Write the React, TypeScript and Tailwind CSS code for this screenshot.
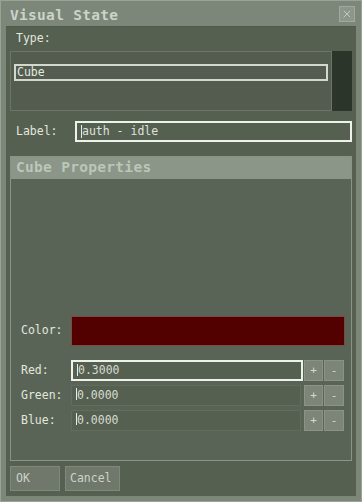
import { X } from 'lucide-react';

const mono = { fontFamily: '"DejaVu Sans Mono", "Liberation Mono", monospace' };

const Spin = ({ label, value, focused }: { label: string; value: string; focused?: boolean }) => (
  <div className="flex items-center h-[21px]">
    <span className="w-[60px] pl-[10px] text-[11.5px] text-[#e2e7de]">{label}</span>
    <div
      className={`relative flex items-center h-full pl-[5px] text-[11.5px] text-[#d6dbd2] ${
        focused ? 'w-[232px] border-2 border-[#eef2ea] bg-[#566051]' : 'w-[230px] border border-[#626c5e] bg-[#556050]'
      }`}
    >
      <span className="absolute left-[4px] top-[2px] w-px h-[12px] bg-[#e8ece4]" />
      {value}
    </div>
    <div className={`flex h-full gap-px ${focused ? 'ml-px' : 'ml-[3px]'}`}>
      <button className="w-[19px] h-full bg-[#7d8579] border border-[#8b9387] text-[#d4d9d0] text-[11px] leading-none">+</button>
      <button className="w-[20px] h-full bg-[#7d8579] border border-[#8b9387] text-[#d4d9d0] text-[11px] leading-none">-</button>
    </div>
  </div>
);

const App = () => {
  return (
    <div style={mono} className="w-[362px] h-[502px] bg-[#7c8679] border border-[#9aa296] flex flex-col overflow-hidden">
      <div className="h-[25px] flex items-center justify-between pl-[9px] pr-[6px] shrink-0">
        <span className="mt-[4px] text-[14.5px] font-bold text-[#ccd3c8] tracking-[0.3px]">Visual State</span>
        <button className="w-[16px] h-[16px] bg-[#8d968a] border border-[#a2aa9e] flex items-center justify-center text-[#dfe4db]">
          <X size={12} strokeWidth={1.3} />
        </button>
      </div>

      <div className="flex-1 mx-[5px] mb-[5px] bg-[#566051] border-t border-[#4f584b] px-[4px] flex flex-col">
        <div className="h-[24px] flex items-center pl-[6px] text-[11.5px] text-[#e2e7de]">Type:</div>

        <div className="h-[60px] flex shrink-0">
          <div className="flex-1 border border-[#6c7668] bg-[#535c4f] pt-[12px] px-[3px]">
            <div className="h-[17px] border-2 border-[#d3d8cf] flex items-center pl-[1px] text-[11.5px] text-[#e4e8e0]">Cube</div>
          </div>
          <div className="w-[20px] bg-[#2b3529]" />
        </div>

        <div className="mt-[10px] h-[21px] flex items-center shrink-0">
          <span className="w-[65px] pl-[6px] text-[11.5px] text-[#e2e7de]">Label:</span>
          <div className="relative flex-1 h-full border-2 border-[#eef2ea] flex items-center pl-[5px] text-[11.5px] text-[#dfe3db]">
            <span className="absolute left-[4px] top-[2px] w-px h-[13px] bg-[#e8ece4]" />
            auth - idle
          </div>
        </div>

        <div className="mt-[14px] h-[305px] border border-[#8a9486] flex flex-col shrink-0">
          <div className="h-[22px] bg-[#8b9688] flex items-center pl-[5px] text-[14.5px] font-bold text-[#bcc6b8] tracking-[0.3px]">
            Cube Properties
          </div>
          <div className="flex-1 flex flex-col pt-[137px] pr-[6px] bg-[#5a6456]">
            <div className="flex items-center h-[30px]">
              <span className="w-[60px] pl-[10px] text-[11.5px] text-[#e2e7de]">Color:</span>
              <div className="flex-1 h-full bg-[#520000] border border-[#7a4a44]" />
            </div>
            <div className="mt-[14px] flex flex-col gap-[4px]">
              <Spin label="Red:" value="0.3000" focused />
              <Spin label="Green:" value="0.0000" />
              <Spin label="Blue:" value="0.0000" />
            </div>
          </div>
        </div>

        <div className="mt-[5px] flex gap-[5px]">
          <button className="w-[50px] h-[25px] bg-[#6f786b] border border-[#7f887b] text-left pl-[5px] text-[11.5px] text-[#cdd3c9]">OK</button>
          <button className="w-[55px] h-[25px] bg-[#6f786b] border border-[#7f887b] text-left pl-[4px] text-[11.5px] text-[#cdd3c9]">Cancel</button>
        </div>
      </div>
    </div>
  );
};

export default App;
